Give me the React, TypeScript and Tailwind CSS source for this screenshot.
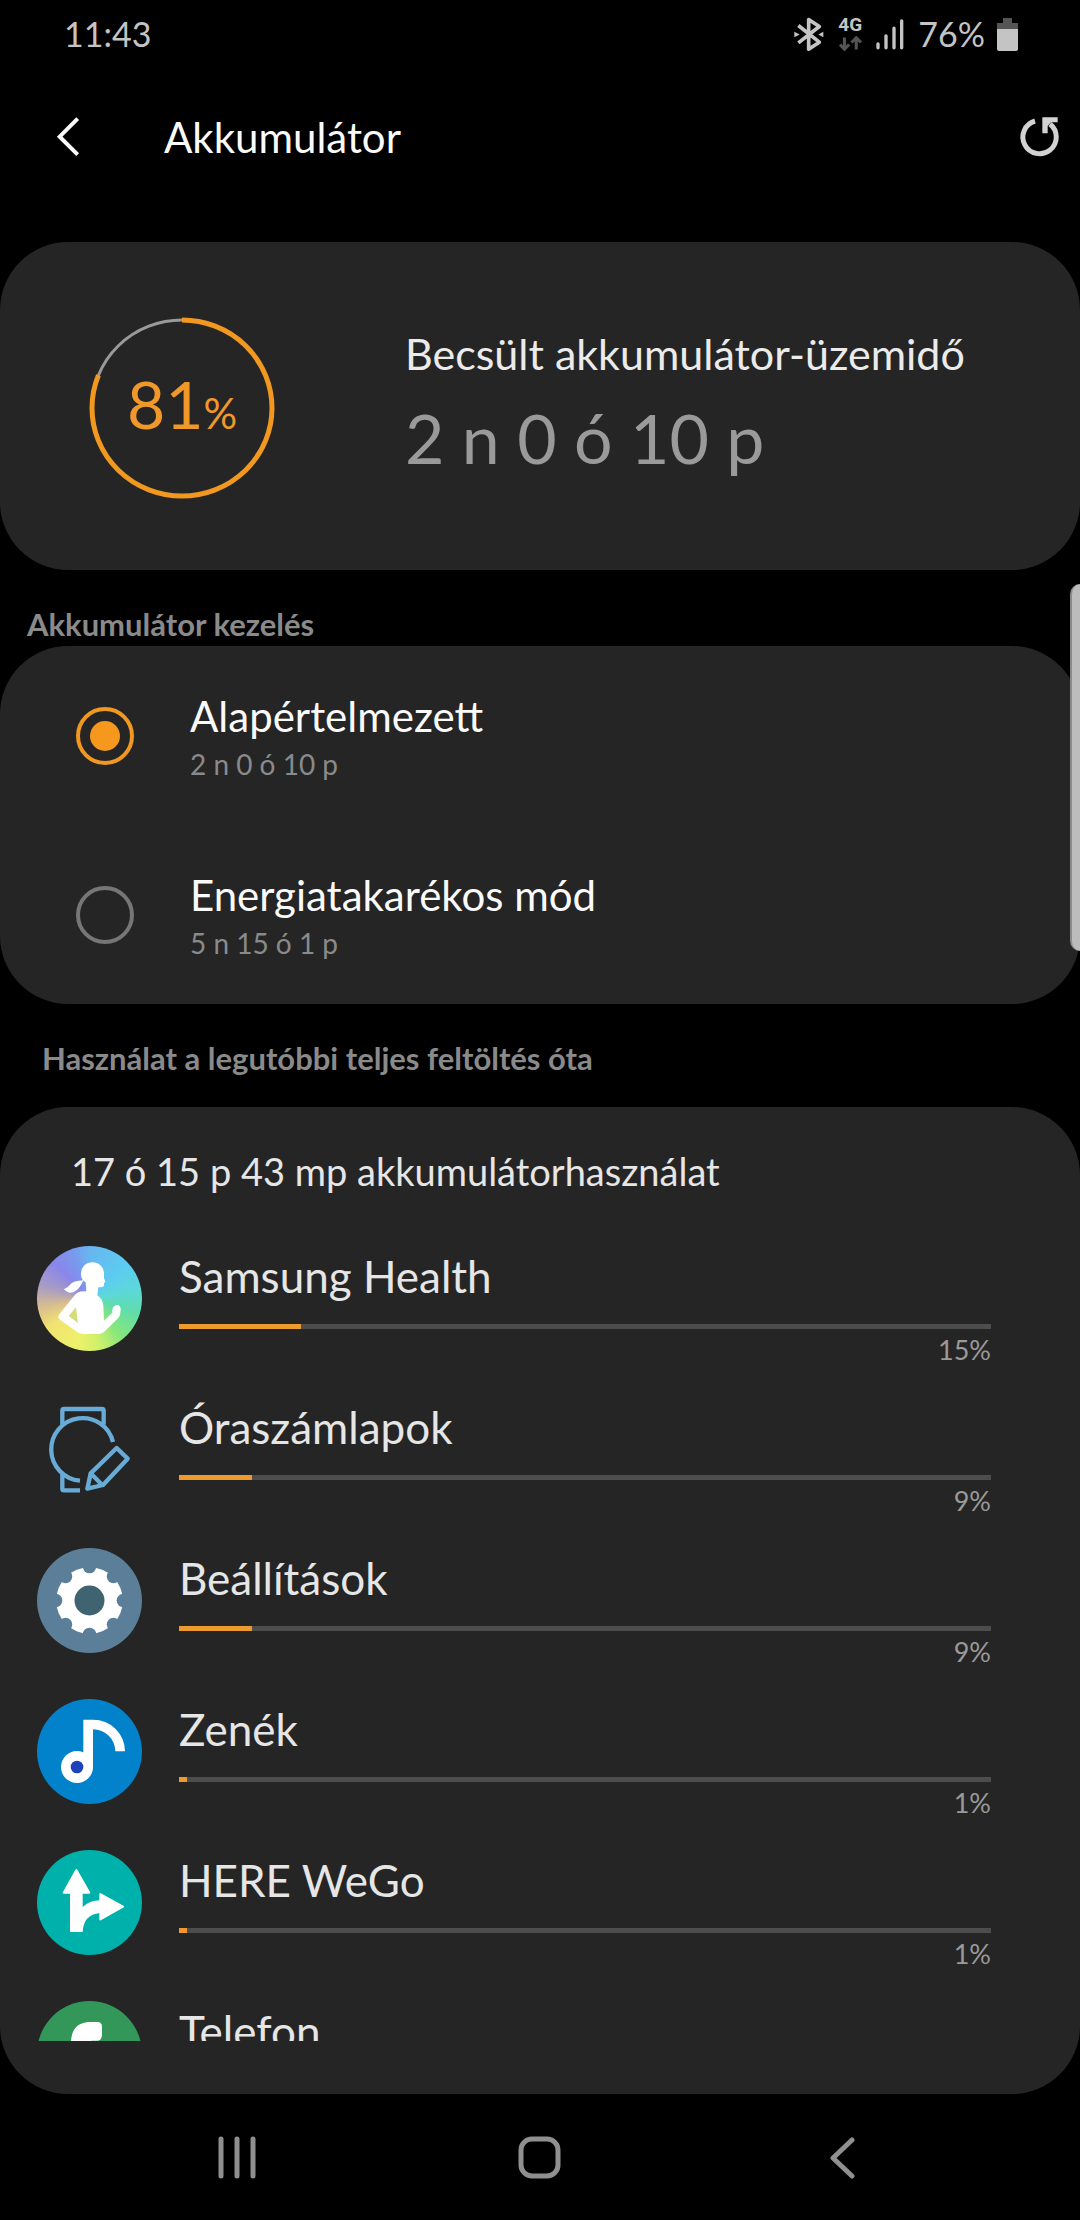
import { useState } from "react";
import type { ReactNode } from "react";

interface PowerMode {
  id: string;
  label: string;
  remaining: string;
}

interface AppUsage {
  name: string;
  percent: number;
  icon: ReactNode;
}

const powerModes: PowerMode[] = [
  { id: "default", label: "Alapértelmezett", remaining: "2 n 0 ó 10 p" },
  { id: "saving", label: "Energiatakarékos mód", remaining: "5 n 15 ó 1 p" },
];

const HealthIcon = () => (
  <div className="size-full rounded-full bg-[conic-gradient(#67b6f0_0deg,#5ccdf0_50deg,#5cd8d8_80deg,#5fdcae_105deg,#86e67c_140deg,#d2f06a_170deg,#eef06c_195deg,#f2e270_235deg,#d8bd90_260deg,#a89cc4_285deg,#8a86ea_315deg,#7a98ee_340deg,#67b6f0_360deg)]">
    <svg viewBox="51 78 315 315" className="size-full" fill="#fff" aria-hidden="true">
      <path d="M183 162C183 142 197 127 217 127C238 127 252 142 252 162V174L256 185L252 190V195Q251 202 243 202H235L232 226Q248 236 250 258L252 302L277 278Q275 258 290 255Q303 255 302 270L300 284Q298 292 292 297L255 333Q247 342 234 342H190Q181 342 173 337L121 300Q111 293 118 283L164 226Q174 214 190 214H199L197 187Q183 180 183 162Z" />
      <path d="M190 181Q180 208 160 217Q144 222 132 208Q144 203 150 194Q160 182 190 181Z" />
      <path d="M168 262L146 288L174 309Z" fill="#d5dc78" />
    </svg>
  </div>
);

const WatchIcon = () => (
  <svg
    viewBox="51 51 315 315"
    className="size-full"
    fill="none"
    stroke="#67abd6"
    strokeWidth="13"
    strokeLinejoin="round"
    aria-hidden="true"
  >
    <path d="M127 134V92Q127 87 132 87H246Q251 87 251 92V134" />
    <path d="M279 186A94 94 0 1 0 180 302" />
    <path d="M127 278V326Q127 331 132 331H180" />
    <path d="M290 204L323 236L249 315L202 326L212 280Z" />
    <path d="M212 280L246 314" />
  </svg>
);

const SettingsIcon = () => (
  <svg viewBox="51 54 315 315" className="size-full" aria-hidden="true">
    <circle cx="208.5" cy="211.5" r="157.5" fill="#5b7f99" />
    <circle cx="208.5" cy="211.5" r="100" fill="#fff" />
    {[0, 45, 90, 135, 180, 225, 270, 315].map((angle) => (
      <circle
        key={angle}
        cx="208.5"
        cy="110"
        r="20"
        fill="#5b7f99"
        transform={`rotate(${angle} 208.5 211.5)`}
      />
    ))}
    <circle cx="208.5" cy="211.5" r="45" fill="#3f6370" />
  </svg>
);

const MusicIcon = () => (
  <svg viewBox="51 56 315 315" className="size-full" aria-hidden="true">
    <circle cx="208.5" cy="213.5" r="157.5" fill="#0382cc" />
    <path d="M190 118H219A96 95 0 0 1 315 213H286A67 66 0 0 0 219 147V260H190Z" fill="#fff" />
    <circle cx="171" cy="260" r="48" fill="#fff" />
    <circle cx="171" cy="260" r="19" fill="#1f42bb" />
  </svg>
);

const RouteIcon = () => (
  <svg viewBox="51 60 315 315" className="size-full" aria-hidden="true">
    <circle cx="208.5" cy="217.5" r="157.5" fill="#00b0aa" />
    <g fill="#fff" stroke="#fff" strokeWidth="6" strokeLinejoin="round">
      <path d="M169 120L208 188H131Z" />
      <path d="M241 192L309 230L241 268Z" />
    </g>
    <path d="M150 188H188V231Q208 212 240 211V249Q190 254 188 306H150Z" fill="#fff" />
  </svg>
);

const PhoneIcon = () => (
  <svg viewBox="51 513 315 315" className="size-full" aria-hidden="true">
    <circle cx="208.5" cy="670.5" r="157.5" fill="#329759" />
    <path
      d="M153 640C153 600 170 579 205 576H232Q246 576 246 590V614Q246 632 230 632H214Q208 690 268 720V706Q270 694 284 696L310 700Q320 704 318 716V736Q314 756 292 758C210 752 158 706 153 640Z"
      fill="#fff"
    />
  </svg>
);

const appUsages: AppUsage[] = [
  { name: "Samsung Health", percent: 15, icon: <HealthIcon /> },
  { name: "Óraszámlapok", percent: 9, icon: <WatchIcon /> },
  { name: "Beállítások", percent: 9, icon: <SettingsIcon /> },
  { name: "Zenék", percent: 1, icon: <MusicIcon /> },
  { name: "HERE WeGo", percent: 1, icon: <RouteIcon /> },
  { name: "Telefon", percent: 1, icon: <PhoneIcon /> },
];

const StatusBar = () => (
  <div className="flex h-[68px] shrink-0 items-center justify-between pr-[62px] pl-16 text-[#c4c4c4]">
    <time className="text-[34px] leading-10">11:43</time>
    <div className="flex items-center">
      <svg viewBox="98 46 90 104" className="mr-[14px] h-[35px] w-[30px]" fill="none" aria-label="Bluetooth">
        <path d="M111 71L174 121L142 142V53L174 74L111 123" stroke="#c4c4c4" strokeWidth="11" strokeLinejoin="round" />
        <path d="M99 90L115 98L99 106ZM186 90L171 98L186 106Z" fill="#c4c4c4" />
      </svg>
      <div className="mr-[14px] flex w-6 flex-col items-center gap-1">
        <span className="font-[Roboto] text-[19px] leading-[15px] font-bold">4G</span>
        <svg viewBox="232 104 68 44" className="h-[15px] w-[23px]" fill="none" stroke="#555" strokeWidth="9" aria-hidden="true">
          <path d="M248 108V142M235 129L248 143L262 129M283 144V110M269 123L283 109L297 123" />
        </svg>
      </div>
      <svg viewBox="344 52 84 92" className="mr-[14px] h-[31px] w-7" stroke="#c4c4c4" strokeWidth="10" strokeLinecap="round" aria-label="Térerő">
        <path d="M350 126V138M374 102V138M398 79V138M421 57V138" />
      </svg>
      <span className="mr-3 text-[34px] leading-10">76%</span>
      <svg viewBox="708 48 63 99" className="h-[33px] w-[21px]" aria-hidden="true">
        <path d="M726 48H753V63H771V81H708V63H726Z" fill="#555" />
        <path d="M708 81H771V141Q771 147 765 147H714Q708 147 708 141Z" fill="#c4c4c4" />
      </svg>
    </div>
  </div>
);

const Header = () => (
  <header className="flex h-[174px] shrink-0 items-start pt-[46px] pr-5 pl-[54px]">
    <button type="button" aria-label="Vissza" className="flex h-[46px] w-8 items-center">
      <svg viewBox="156 342 96 138" className="h-[46px] w-8" fill="none" stroke="#fafafa" strokeWidth="12" aria-hidden="true">
        <path d="M227 356L173 410L227 464" />
      </svg>
    </button>
    <h1 className="ml-[78px] flex-1 text-[42px] leading-[46px] text-[#fafafa]">Akkumulátor</h1>
    <button type="button" aria-label="Frissítés" className="flex h-[46px] w-[42px] items-center">
      <svg viewBox="772 341 126 138" className="h-[46px] w-[42px]" fill="none" aria-hidden="true">
        <path d="M823 362A50 50 0 1 0 868 371" stroke="#d2d2d2" strokeWidth="15" />
        <path d="M845 351H891V366H871L861 377V399H845Z" fill="#d2d2d2" />
      </svg>
    </button>
  </header>
);

const ChargeRing = ({ percent }: { percent: number }) => (
  <div className="relative flex h-[182px] w-[186px] shrink-0 items-center justify-center">
    <svg viewBox="0 0 186 182" className="absolute inset-0 size-full" fill="none" aria-hidden="true">
      <ellipse cx="93" cy="91" rx="90" ry="88" stroke="#9a9a9a" strokeWidth="3" />
      <path
        d="M93 3A90 88 0 0 1 93 179A90 88 0 0 1 93 3"
        stroke="#f0981f"
        strokeWidth="5"
        pathLength="100"
        strokeDasharray={`${percent} 100`}
      />
    </svg>
    <p className="text-[66px] leading-[72px] text-[#f0982a]">
      {percent}
      <span className="text-[42px]">%</span>
    </p>
  </div>
);

export default function App() {
  const [mode, setMode] = useState("default");

  return (
    <div className="relative flex h-screen w-full flex-col overflow-hidden bg-black font-[Lato,sans-serif]">
      <StatusBar />
      <Header />

      <main className="flex min-h-0 flex-1 flex-col">
        <section className="flex h-[328px] shrink-0 items-center rounded-[68px] bg-[#252525] pt-1 pl-[89px]">
          <ChargeRing percent={81} />
          <div className="ml-[130px] flex flex-col pb-2">
            <h2 className="text-[43px] leading-[56px] text-[#ebebeb]">Becsült akkumulátor-üzemidő</h2>
            <p className="mt-3 text-[68px] leading-[88px] text-[#9a9a9a]">2 n 0 ó 10 p</p>
          </div>
        </section>

        <h2 className="mt-[34px] pl-[27px] text-[31px] leading-10 font-bold text-[#8a8a8a]">Akkumulátor kezelés</h2>
        <fieldset aria-label="Akkumulátor kezelés" className="mt-[2px] shrink-0 rounded-[68px] bg-[#252525]">
          {powerModes.map((item) => (
            <label key={item.id} className="flex h-[179px] items-center pl-[76px]">
              <input
                type="radio"
                name="power-mode"
                value={item.id}
                checked={mode === item.id}
                onChange={() => setMode(item.id)}
                className="size-[58px] shrink-0 appearance-none rounded-full border-4 border-[#767676] bg-clip-content p-[10px] checked:border-[#f0981f] checked:bg-[#f5981d]"
              />
              <span className="ml-14 flex flex-col">
                <span className="text-[42px] leading-[56px] text-[#fafafa]">{item.label}</span>
                <span className="text-[28px] leading-10 text-[#8a8a8a]">{item.remaining}</span>
              </span>
            </label>
          ))}
        </fieldset>

        <h2 className="mt-[34px] pl-[42px] text-[31px] leading-10 font-bold text-[#8a8a8a]">
          Használat a legutóbbi teljes feltöltés óta
        </h2>
        <section className="mt-[29px] flex min-h-0 flex-1 flex-col rounded-[68px] bg-[#252525] pb-[53px]">
          <h3 className="pt-9 pb-[47px] pl-[71px] text-[38px] leading-[56px] text-[#e6e6e6]">
            17 ó 15 p 43 mp akkumulátorhasználat
          </h3>
          <ul className="min-h-0 flex-1 overflow-hidden">
            {appUsages.map((app) => (
              <li key={app.name} className="flex h-[151px] items-start pr-[89px] pl-[37px]">
                <div className="size-[105px] shrink-0">{app.icon}</div>
                <div className="ml-[37px] flex min-w-0 flex-1 flex-col">
                  <span className="pt-[2px] text-[44px] leading-[56px] text-[#e6e6e6]">{app.name}</span>
                  <div
                    role="progressbar"
                    aria-label={app.name}
                    aria-valuenow={app.percent}
                    className="mt-5 h-[5px] bg-[#4d4d4d]"
                  >
                    <div className="h-full bg-[#ee9a2c]" style={{ width: `${app.percent}%` }} />
                  </div>
                  <span className="mt-[3px] self-end text-[27px] leading-9 text-[#9a9a9a]">{app.percent}%</span>
                </div>
              </li>
            ))}
          </ul>
        </section>
      </main>

      <nav className="flex h-[126px] shrink-0 items-center justify-between px-[207px]" aria-label="Navigáció">
        <button type="button" aria-label="Legutóbbi alkalmazások" className="p-2">
          <svg viewBox="0 0 44 44" className="size-11" stroke="#8f8f8f" strokeWidth="5" strokeLinecap="round" aria-hidden="true">
            <path d="M6 4V41M22 4V41M38 4V41" />
          </svg>
        </button>
        <button type="button" aria-label="Kezdőképernyő" className="p-2">
          <svg viewBox="0 0 44 44" className="size-11" fill="none" stroke="#8f8f8f" strokeWidth="5" aria-hidden="true">
            <rect x="3" y="4" width="37" height="37" rx="11" />
          </svg>
        </button>
        <button type="button" aria-label="Vissza" className="p-2">
          <svg viewBox="0 0 44 44" className="size-11" fill="none" stroke="#8f8f8f" strokeWidth="5" strokeLinecap="round" strokeLinejoin="round" aria-hidden="true">
            <path d="M31 5L12 23L31 41" />
          </svg>
        </button>
      </nav>

      {/* edge panel handle */}
      <div className="absolute top-[584px] right-0 h-[367px] w-[10px] rounded-l-[10px] border-l-2 border-[#8a8a8a] bg-[#bcbcbc]" />
    </div>
  );
}
